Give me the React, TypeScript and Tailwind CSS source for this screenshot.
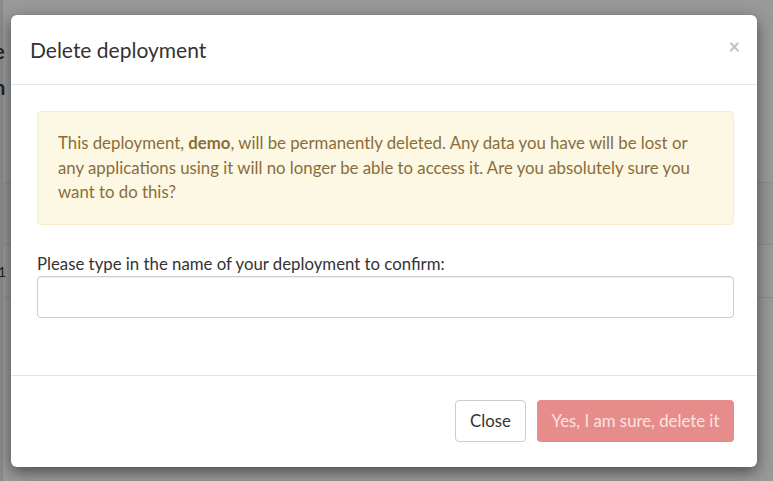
import React from "react";

export default function App() {
  const font = { fontFamily: "Lato, 'Noto Sans', sans-serif" };
  return (
    <div className="relative w-[773px] h-[481px] overflow-hidden bg-[#999999]" style={font}>
      {/* background page (dimmed) */}
      <div className="flex h-full">
        <div className="w-[3px] h-full bg-[#8a8a8a]" />
        <div className="flex-1 flex flex-col">
          <div className="h-[38px]" />
          <div className="text-[20px] font-bold leading-[26px] text-[#222] -ml-[9px]">e</div>
          <div className="h-[10px]" />
          <div className="text-[20px] font-bold leading-[26px] text-[#222] -ml-[9px]">n</div>
          <div className="h-[82px]" />
          <div className="h-[63px] border-t border-b border-[#8c8c8c] bg-[#969696]" />
          <div className="h-[53px] border-b border-[#8c8c8c] flex items-center text-[14px] text-[#222] -ml-[5px]">1</div>
        </div>
      </div>

      {/* modal */}
      <div className="absolute left-[11px] top-[15px] w-[746px] h-[452px] bg-white rounded-[6px] shadow-[0_5px_15px_rgba(0,0,0,0.5)] flex flex-col">
        <div className="h-[70px] border-b border-[#e5e5e5] flex items-center justify-between pl-[19px] pr-[17px] shrink-0">
          <div className="text-[21px] text-[#333] leading-[26px] mt-[1px]">Delete deployment</div>
          <div className="text-[20px] font-bold text-[#c2c2c2] leading-none -mt-[8px]">×</div>
        </div>
        <div className="flex-1 pl-[26px] pr-[23px] pt-[26px]">
          <div className="bg-[#fcf8e3] border border-[#faebcc] rounded-[4px] px-[20px] py-[19px] text-[16.8px] leading-[24.5px] text-[#8a6d3b]">
            This deployment, <b>demo</b>, will be permanently deleted. Any data you have will be lost or<br />
            any applications using it will no longer be able to access it. Are you absolutely sure you<br />
            want to do this?
          </div>
          <div className="mt-[27px] text-[16.8px] leading-[24px] text-[#333]">
            Please type in the name of your deployment to confirm:
          </div>
          <div className="h-[42px] border border-[#cccccc] rounded-[4px] shadow-[inset_0_1px_1px_rgba(0,0,0,0.075)]" />
        </div>
        <div className="h-[92px] border-t border-[#e5e5e5] flex items-start justify-end gap-[11px] pt-[24px] pr-[23px] shrink-0">
          <div className="w-[71px] h-[42px] border border-[#cccccc] rounded-[4px] flex items-center justify-center text-[16.8px] text-[#333]">
            Close
          </div>
          <div className="w-[197px] h-[42px] rounded-[4px] bg-[#e68d8b] flex items-center justify-center text-[16.8px] text-[#fbe3e2]">
            Yes, I am sure, delete it
          </div>
        </div>
      </div>
    </div>
  );
}
